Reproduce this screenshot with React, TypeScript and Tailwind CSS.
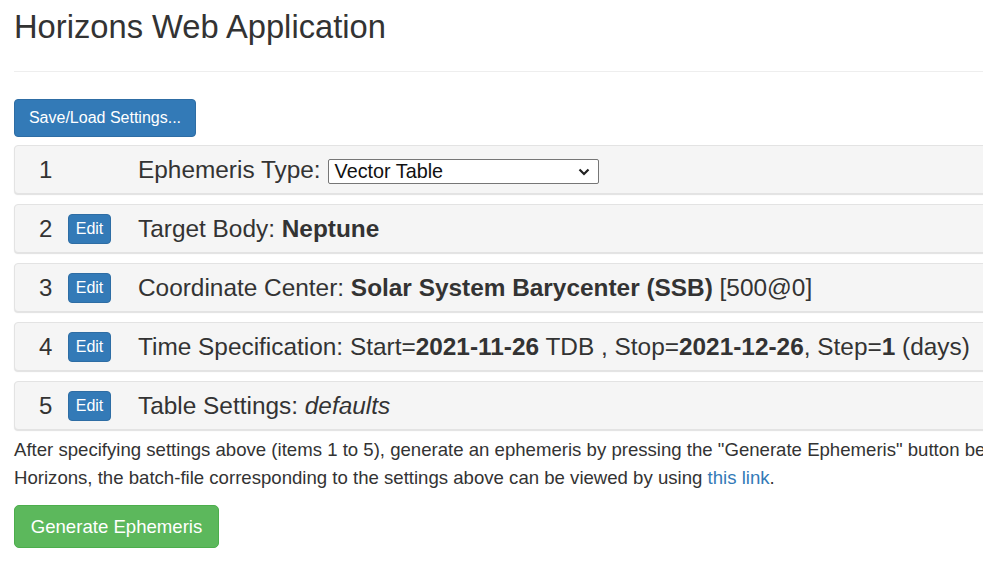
import React from "react";

const EditBtn = () => (
  <button className="w-[43px] h-[30px] rounded-[4px] bg-[#337ab7] border border-[#2e6da4] text-white text-[16px] leading-[24px] flex items-center justify-center">
    Edit
  </button>
);

const Row = ({ n, edit, children }: { n: number; edit?: boolean; children: React.ReactNode }) => (
  <div className="h-[49px] w-[1140px] bg-[#f5f5f5] border border-[#e3e3e3] rounded-[4px] shadow-[0_1px_1px_rgba(0,0,0,0.12)] flex items-center pl-[24px] text-[24px] text-[#333]">
    <div className="w-[29px] pt-[1px]">{n}</div>
    <div className="w-[43px] flex items-center">{edit ? <EditBtn /> : null}</div>
    <div className="ml-[27px] pt-[1px] flex items-center whitespace-nowrap text-[24.4px]">{children}</div>
  </div>
);

export default function App() {
  return (
    <div className="w-[983px] h-[562px] overflow-hidden bg-white" style={{ fontFamily: '"Liberation Sans", Arial, sans-serif' }}>
      <div className="w-[1200px] px-[14px] text-[#333]">
        <h1 className="pt-[7px] text-[32.7px] leading-[40px] font-normal text-[#333]">Horizons Web Application</h1>
        <div className="mt-[24px] h-px bg-[#eee] w-[1170px]" />
        <button className="mt-[27px] h-[38px] w-[182px] rounded-[4px] bg-[#337ab7] border border-[#2e6da4] text-white text-[16px] leading-[24px]">
          Save/Load Settings...
        </button>
        <div className="mt-[8px] flex flex-col gap-[10px]">
          <Row n={1}>
            <span>Ephemeris Type:</span>
            <div className="ml-[7px] mt-[4px] relative w-[271px] h-[25px] bg-white border border-[#767676] rounded-[2px] flex items-center pl-[6px] text-[19.8px] text-[#111]">
              Vector Table
              <svg className="absolute right-[8px] top-[8px]" width="12" height="8" viewBox="0 0 12 8">
                <path d="M1.5 1.5 L6 6 L10.5 1.5" stroke="#222" strokeWidth="2.2" fill="none" />
              </svg>
            </div>
          </Row>
          <Row n={2} edit>
            <span>Target Body:&nbsp;<b>Neptune</b></span>
          </Row>
          <Row n={3} edit>
            <span>Coordinate Center:&nbsp;<b>Solar System Barycenter (SSB)</b> [500@0]</span>
          </Row>
          <Row n={4} edit>
            <span>
              Time Specification: Start=<b>2021-11-26</b> TDB , Stop=<b>2021-12-26</b>, Step=<b>1</b> (days)
            </span>
          </Row>
          <Row n={5} edit>
            <span>Table Settings:&nbsp;<i>defaults</i></span>
          </Row>
        </div>
        <p className="mt-[6px] text-[18.6px] leading-[28px] text-[#333] whitespace-nowrap">
          After specifying settings above (items 1 to 5), generate an ephemeris by pressing the "Generate Ephemeris" button below. For users of the
          <br />
          Horizons, the batch-file corresponding to the settings above can be viewed by using{" "}
          <a className="text-[#337ab7]">this link</a>.
        </p>
        <button className="mt-[13px] h-[43px] w-[205px] rounded-[5px] bg-[#5cb85c] border border-[#4cae4c] text-white text-[18.6px] leading-[26px]">
          Generate Ephemeris
        </button>
      </div>
    </div>
  );
}
